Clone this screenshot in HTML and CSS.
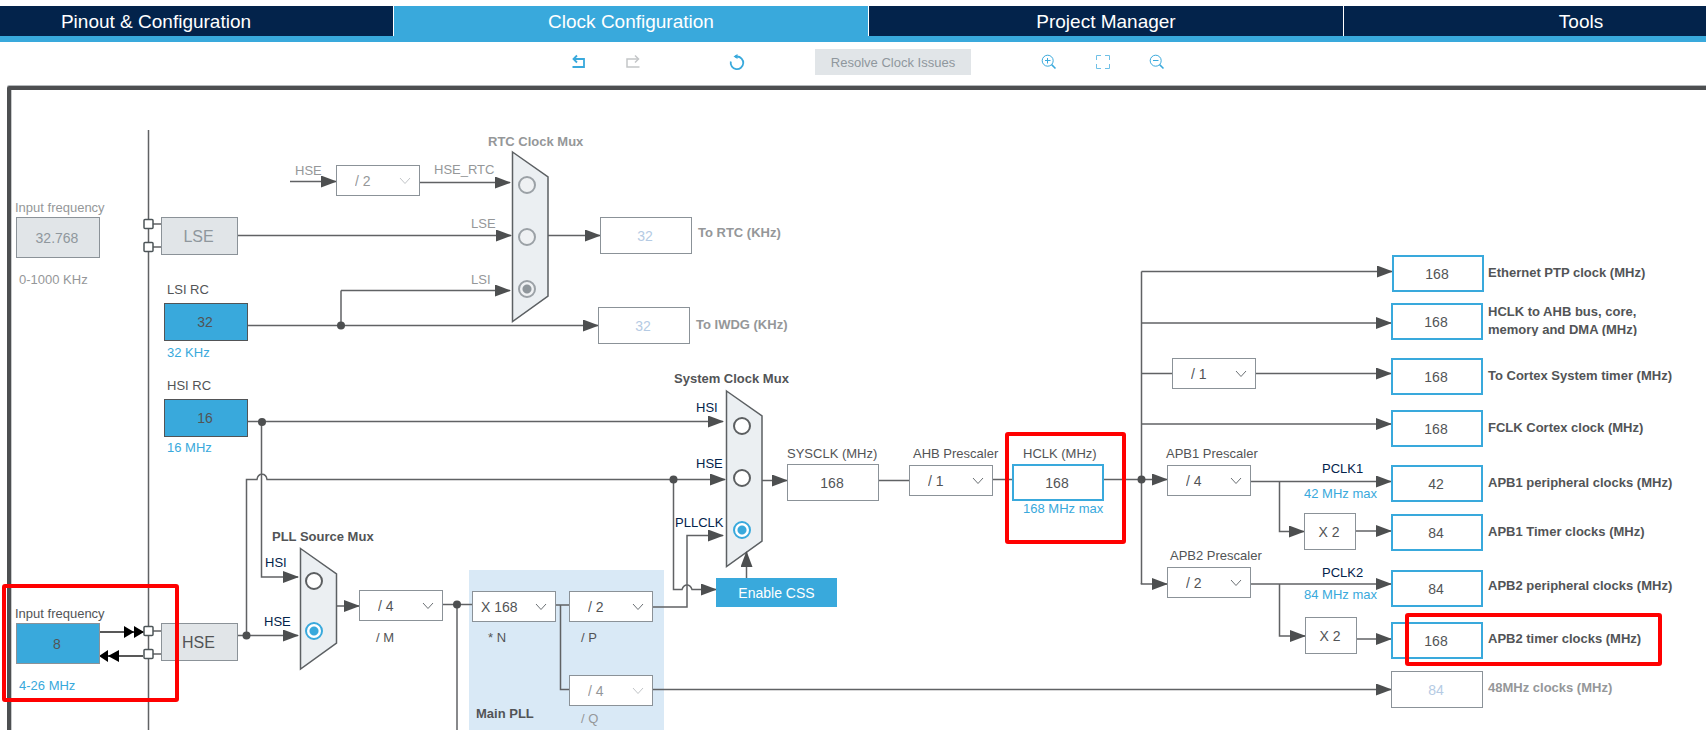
FILE: index.html
```html
<!DOCTYPE html>
<html lang="en">
<head>
<meta charset="utf-8">
<title>Clock Configuration</title>
<link rel="stylesheet" href="styles.css">
</head>
<body>
<nav class="tabs">
  <a class="tab tab-first" href="#pinout">Pinout &amp; Configuration</a>
  <a class="tab tab-active" href="#clock" aria-current="page">Clock Configuration</a>
  <a class="tab" href="#project">Project Manager</a>
  <a class="tab tab-last" href="#tools">Tools</a>
</nav>

<div class="toolbar">
  <div class="tool-group">
    <button class="tool" aria-label="Undo"><svg viewBox="0 0 22 22"><path d="M4.500 16H16V8H6" fill="none" stroke-width="1.800"/><path d="M9 4.500L5.500 8L9 11.500" fill="none" stroke-width="1.800"/></svg></button>
    <button class="tool tool-off" aria-label="Redo" disabled><svg viewBox="0 0 22 22"><path d="M17.500 16H5V8H16" fill="none" stroke-width="1.500"/><path d="M13 4.500L16.500 8L13 11.500" fill="none" stroke-width="1.500"/></svg></button>
  </div>
  <button class="tool tool-reset" aria-label="Reset"><svg viewBox="0 0 22 22"><path d="M4.800 10.500A6.300 6.300 0 1 0 11 5.500H9" fill="none" stroke-width="1.800"/><path d="M11.500 3L7.500 5.500L11.500 8Z" fill="currentColor" stroke="none"/></svg></button>
  <button class="resolve" disabled>Resolve Clock Issues</button>
  <div class="tool-group">
    <button class="tool" aria-label="Zoom in"><svg viewBox="0 0 22 22"><circle cx="9.700" cy="9.700" r="5.500" fill="none"/><path d="M13.600 13.600L17.500 17.500" fill="none" stroke-width="1.500"/><path d="M7 9.500H12.500M9.500 7V12.500" fill="none"/></svg></button>
    <button class="tool tool-fit" aria-label="Fit to window"><svg viewBox="0 0 22 22"><path d="M4.500 9V4.500H9M13 4.500H17.500V9M17.500 13V17.500H13M9 17.500H4.500V13" fill="none"/></svg></button>
    <button class="tool" aria-label="Zoom out"><svg viewBox="0 0 22 22"><circle cx="9.700" cy="9.700" r="5.500" fill="none"/><path d="M13.600 13.600L17.500 17.500" fill="none" stroke-width="1.500"/><path d="M7 9.500H12.500" fill="none"/></svg></button>
  </div>
</div>

<main class="diagram">
  <div class="frame"></div>
  <div class="pll-panel"></div>

  <svg class="wires" width="1706" height="648" viewBox="0 82 1706 648" aria-hidden="true">
    <defs>
      <marker id="arrow" markerUnits="userSpaceOnUse" markerWidth="16" markerHeight="12" refX="15" refY="6" orient="auto"><path class="head" d="M0 0L16 6L0 12Z"/></marker>
      <symbol id="chevron" viewBox="0 0 12 8"><path d="M1 1L6 6.500L11 1"/></symbol>
    </defs>
    <g class="line">
      <path d="M148.500 130V730"/>
      <path d="M153 224H161M153 247H161M153 631H161M153 654H161"/>
      <path d="M457 605V730"/>
      <path d="M443 604.500H472"/>
      <path d="M556 605H569M560.500 605V689.500H569"/>
      <path d="M879 480.500H909M993 479.500H1012"/>
      <path d="M1141.500 271.500V584M1141.500 373.500H1172"/>
      <path d="M341 325V290.500" />
    </g>
    <g class="line pointed">
      <path d="M290 181.500H336"/>
      <path d="M420 182.500H510"/>
      <path d="M238 235.500H511"/>
      <path d="M341 290.500H510"/>
      <path d="M248 325.500H598"/>
      <path d="M548 235.500H600"/>
      <path d="M248 421.500H723"/>
      <path d="M261.500 422V577H298"/>
      <path d="M238 635.500H298"/>
      <path d="M246.500 635V479.500H257C258 472.500 266 472.500 267 479.500H725"/>
      <path d="M336 606H359"/>
      <path d="M673.500 479.500V589.500H682C684 583.500 690 583.500 692 589.500H716"/>
      <path d="M653 607H687V535.500H723"/>
      <path d="M762 480.500H787"/>
      <path d="M1104 479.500H1167"/>
      <path d="M1141.500 271.500H1392"/>
      <path d="M1141.500 323H1391"/>
      <path d="M1256 373.500H1391"/>
      <path d="M1141.500 424H1391"/>
      <path d="M1141.500 583V584H1167"/>
      <path d="M1251 481.500H1391"/>
      <path d="M1279.500 481.500V531.500H1304"/>
      <path d="M1356 531H1391"/>
      <path d="M1251 584H1391"/>
      <path d="M1279.500 584V636H1305"/>
      <path d="M1357 639H1391"/>
      <path d="M653 689.500H1391"/>
    </g>
    <g class="mux-shape">
      <path d="M512.500 152L548 177V296L512.500 321.500Z"/>
      <path d="M300.500 548.500L336.500 574V643L300.500 669Z"/>
      <path d="M726.500 391L762 416V541L726.500 566.500Z"/>
    </g>
    <g class="line pointed"><path d="M746.500 578V552"/></g>
    <g class="dots">
      <circle cx="341" cy="325.500" r="4"/><circle cx="262" cy="422" r="4"/><circle cx="246.500" cy="635.500" r="4"/>
      <circle cx="457" cy="604.500" r="4"/><circle cx="673.500" cy="479.500" r="4"/><circle cx="1141.500" cy="479.500" r="4"/>
    </g>
    <g class="pads">
      <rect x="144" y="219.500" width="9" height="9" rx="1"/><rect x="144" y="242.500" width="9" height="9" rx="1"/>
      <rect x="144" y="626.500" width="9" height="9" rx="1"/><rect x="144" y="649.500" width="9" height="9" rx="1"/>
    </g>
    <g class="ext">
      <path d="M100 632H143M143 656H104"/>
      <path class="ext-head" d="M124 626L134 632L124 638ZM134 626L144 632L134 638ZM119 650L108 656L119 662ZM108 650L99 656L108 662Z"/>
    </g>
  </svg>

  <!-- Oscillators -->
  <label class="text dim at-lse-in-label" for="lse-in">Input frequency</label>
  <input class="box input gray at-lse-in" id="lse-in" value="32.768" disabled>
  <span class="text dim at-lse-range">0-1000 KHz</span>
  <div class="box source dim at-lse">LSE</div>
  <label class="text at-lsi-label" for="lsi">LSI RC</label>
  <input class="box osc at-lsi" id="lsi" value="32" readonly>
  <span class="text blue at-lsi-range">32 KHz</span>
  <label class="text at-hsi-label" for="hsi">HSI RC</label>
  <input class="box osc at-hsi" id="hsi" value="16" readonly>
  <span class="text blue at-hsi-range">16 MHz</span>
  <label class="text at-hse-in-label" for="hse-in">Input frequency</label>
  <input class="box input fill at-hse-in" id="hse-in" value="8">
  <span class="text blue at-hse-range">4-26 MHz</span>
  <div class="box source at-hse">HSE</div>

  <!-- RTC -->
  <span class="text dim at-rtc-hse">HSE</span>
  <div class="pick dim at-rtc-div"><select aria-label="RTC prescaler" disabled><option>/ 2</option></select><svg class="chevron"><use href="#chevron"/></svg></div>
  <span class="text dim bold at-rtc-title">RTC Clock Mux</span>
  <label class="text dim at-rtc-l1" for="rtc-1">HSE_RTC</label>
  <label class="text dim at-rtc-l2" for="rtc-2">LSE</label>
  <label class="text dim at-rtc-l3" for="rtc-3">LSI</label>
  <div class="mux at-rtc-mux">
    <input type="radio" name="rtc" id="rtc-1" disabled>
    <input type="radio" name="rtc" id="rtc-2" disabled>
    <input type="radio" name="rtc" id="rtc-3" disabled checked>
  </div>
  <input class="box value off at-rtc-out" id="rtc-out" value="32" disabled>
  <label class="text dim bold at-rtc-out-label" for="rtc-out">To RTC (KHz)</label>
  <input class="box value off at-iwdg" id="iwdg" value="32" disabled>
  <label class="text dim bold at-iwdg-label" for="iwdg">To IWDG (KHz)</label>

  <!-- PLL -->
  <span class="text bold at-src-title">PLL Source Mux</span>
  <label class="text navy at-src-l1" for="src-1">HSI</label>
  <label class="text navy at-src-l2" for="src-2">HSE</label>
  <div class="mux mux-short at-src-mux">
    <input type="radio" name="src" id="src-1">
    <input type="radio" name="src" id="src-2" checked>
  </div>
  <div class="pick at-m"><select id="m"><option>/ 4</option></select><svg class="chevron"><use href="#chevron"/></svg></div>
  <label class="text at-m-label" for="m">/ M</label>
  <div class="pick wide at-n"><select id="n"><option>X 168</option></select><svg class="chevron"><use href="#chevron"/></svg></div>
  <label class="text at-n-label" for="n">* N</label>
  <div class="pick at-p"><select id="p"><option>/ 2</option></select><svg class="chevron"><use href="#chevron"/></svg></div>
  <label class="text at-p-label" for="p">/ P</label>
  <div class="pick dim at-q"><select id="q" disabled><option>/ 4</option></select><svg class="chevron"><use href="#chevron"/></svg></div>
  <label class="text dim at-q-label" for="q">/ Q</label>
  <span class="text bold at-pll-title">Main PLL</span>

  <!-- System clock -->
  <span class="text bold at-sys-title">System Clock Mux</span>
  <label class="text navy at-sys-l1" for="sys-1">HSI</label>
  <label class="text navy at-sys-l2" for="sys-2">HSE</label>
  <label class="text navy at-sys-l3" for="sys-3">PLLCLK</label>
  <div class="mux at-sys-mux">
    <input type="radio" name="sys" id="sys-1">
    <input type="radio" name="sys" id="sys-2">
    <input type="radio" name="sys" id="sys-3" checked>
  </div>
  <button class="css-button at-css">Enable CSS</button>
  <label class="text at-sysclk-label" for="sysclk">SYSCLK (MHz)</label>
  <input class="box value at-sysclk" id="sysclk" value="168" readonly>
  <label class="text at-ahb-label" for="ahb">AHB Prescaler</label>
  <div class="pick at-ahb"><select id="ahb"><option>/ 1</option></select><svg class="chevron"><use href="#chevron"/></svg></div>
  <label class="text at-hclk-label" for="hclk">HCLK (MHz)</label>
  <input class="box value live at-hclk" id="hclk" value="168">
  <span class="text blue at-hclk-max">168 MHz max</span>

  <!-- Peripheral buses -->
  <div class="pick at-cortex-div"><select aria-label="Cortex prescaler"><option>/ 1</option></select><svg class="chevron"><use href="#chevron"/></svg></div>
  <label class="text at-apb1-label" for="apb1">APB1 Prescaler</label>
  <div class="pick at-apb1"><select id="apb1"><option>/ 4</option></select><svg class="chevron"><use href="#chevron"/></svg></div>
  <label class="text at-apb2-label" for="apb2">APB2 Prescaler</label>
  <div class="pick at-apb2"><select id="apb2"><option>/ 2</option></select><svg class="chevron"><use href="#chevron"/></svg></div>
  <span class="text navy at-pclk1">PCLK1</span>
  <span class="text blue at-pclk1-max">42 MHz max</span>
  <div class="box times at-x1">X 2</div>
  <span class="text navy at-pclk2">PCLK2</span>
  <span class="text blue at-pclk2-max">84 MHz max</span>
  <div class="box times at-x2">X 2</div>

  <!-- Outputs -->
  <input class="box value live at-out1" id="out1" value="168">
  <label class="text bold at-out1-label" for="out1">Ethernet PTP clock (MHz)</label>
  <input class="box value live at-out2" id="out2" value="168">
  <label class="text bold two-lines at-out2-label" for="out2">HCLK to AHB bus, core,<br>memory and DMA (MHz)</label>
  <input class="box value live at-out3" id="out3" value="168">
  <label class="text bold at-out3-label" for="out3">To Cortex System timer (MHz)</label>
  <input class="box value live at-out4" id="out4" value="168">
  <label class="text bold at-out4-label" for="out4">FCLK Cortex clock (MHz)</label>
  <input class="box value live at-out5" id="out5" value="42">
  <label class="text bold at-out5-label" for="out5">APB1 peripheral clocks (MHz)</label>
  <input class="box value live at-out6" id="out6" value="84">
  <label class="text bold at-out6-label" for="out6">APB1 Timer clocks (MHz)</label>
  <input class="box value live at-out7" id="out7" value="84">
  <label class="text bold at-out7-label" for="out7">APB2 peripheral clocks (MHz)</label>
  <input class="box value live at-out8" id="out8" value="168">
  <label class="text bold at-out8-label" for="out8">APB2 timer clocks (MHz)</label>
  <input class="box value off at-out9" id="out9" value="84" disabled>
  <label class="text bold dim at-out9-label" for="out9">48MHz clocks (MHz)</label>

  <!-- Highlights -->
  <div class="mark at-mark-hse"></div>
  <div class="mark at-mark-hclk"></div>
  <div class="mark at-mark-apb2"></div>
</main>
</body>
</html>
```
FILE: styles.css
```css
:root {
  --navy: #03234b;
  --blue: #39a9dc;
  --ink: #525456;
  --dim: #959799;
  --edge: #8b9298;
  --gray: #e1e5e8;
}

* { box-sizing: border-box; }

body {
  margin: 0;
  height: 100vh;
  display: flex;
  flex-direction: column;
  overflow: hidden;
  background: #fff;
  color: var(--ink);
  font-family: "Liberation Sans", Arial, sans-serif;
  font-size: 13px;
}

input, select, button { font-family: inherit; margin: 0; }

/* Tabs */
.tabs {
  display: grid;
  grid-template-columns: 394fr 475fr 475fr 362fr;
  margin-top: 6px;
  border-bottom: 6px solid var(--blue);
}
.tab {
  height: 30px;
  line-height: 32px;
  text-align: center;
  font-size: 19px;
  color: #fff;
  background: var(--navy);
  border-right: 1px solid #fff;
  text-decoration: none;
  white-space: nowrap;
}
.tab-first { padding-right: 81px; }
.tab-active { background: var(--blue); }
.tab-last { padding-left: 112px; border-right: 0; }

/* Toolbar */
.toolbar {
  height: 40px;
  display: flex;
  flex: none;
  align-items: center;
  justify-content: center;
  padding-left: 30px;
}
.tool-group { display: flex; gap: 32px; }
.tool {
  width: 22px;
  height: 22px;
  padding: 0;
  border: 0;
  background: none;
  color: var(--blue);
}
.tool svg { display: block; width: 22px; height: 22px; stroke: currentColor; }
.tool-off { color: #c4c6c8; }
.tool-fit { color: #6fc0e6; }
.tool-reset { margin: 0 67px 0 82px; }
.resolve {
  width: 156px;
  height: 26px;
  margin-right: 67px;
  padding: 0;
  border: 0;
  background: var(--gray);
  color: #8f979d;
  font-size: 13px;
}

/* Diagram canvas */
.diagram { position: relative; flex: 1; overflow: hidden; }
.frame {
  position: absolute;
  inset: 4px -8px -8px 7px;
  border: 4px solid #4d4f51;
  border-radius: 2px;
  box-shadow: 0 -1px 0 #b4b8bb, inset 1px 0 0 #c8cacb;
}
.wires { position: absolute; left: 0; top: 0; }
.line path { fill: none; stroke: #606264; stroke-width: 1.5; }
.pointed path { marker-end: url(#arrow); }
.line .head, .head { fill: #4d4f50; stroke: none; }
.mux-shape path { fill: #ebeff2; stroke: #5c6063; stroke-width: 1.5; }
.dots circle { fill: #4d4f50; }
.pads rect { fill: #fff; stroke: #4d5558; stroke-width: 1.5; }
.ext path { fill: none; stroke: #222; stroke-width: 1.5; }
.ext .ext-head { fill: #000; stroke: none; }

.pll-panel {
  position: absolute;
  left: 469px;
  top: 488px;
  width: 195px;
  bottom: 0;
  background: #d9e9f6;
}

.text {
  position: absolute;
  line-height: 18px;
  font-size: 13px;
  white-space: nowrap;
}
.bold { font-weight: bold; }
.dim { color: var(--dim); }
.blue { color: var(--blue); }
.navy { color: var(--navy); }
.two-lines { height: 33px; overflow: hidden; }

.box {
  position: absolute;
  padding: 0 2px 0 0;
  border: 1px solid var(--edge);
  border-radius: 0;
  background: #fff;
  color: var(--ink);
  font-size: 14px;
  text-align: center;
}
.input { width: 84px; height: 41px; }
.osc { width: 84px; height: 38px; background: var(--blue); border-color: var(--ink); }
.gray { background: var(--gray); color: #8f979d; }
.fill { background: var(--blue); }
.source {
  width: 77px;
  height: 38px;
  line-height: 38px;
  background: var(--gray);
  font-size: 16px;
}
.source.dim { color: #8f979d; }
.value { width: 92px; height: 37px; }
.live { border: 2px solid var(--blue); }
.off { color: #b5cbe4; }
.times { width: 52px; height: 37px; line-height: 36px; }

.pick { position: absolute; width: 84px; height: 31px; }
.pick select {
  appearance: none;
  width: 100%;
  height: 100%;
  padding: 0 0 0 18px;
  border: 1px solid var(--edge);
  border-radius: 0;
  background: #fff;
  color: var(--ink);
  font-size: 14px;
  opacity: 1;
}
.pick.wide select { padding-left: 8px; }
.pick.dim select { color: var(--dim); }
.chevron {
  position: absolute;
  right: 9px;
  top: 12px;
  width: 12px;
  height: 8px;
  fill: none;
  stroke: #6b7074;
  pointer-events: none;
}
.pick.dim .chevron { stroke: #c2c5c8; }

.mux { position: absolute; display: flex; flex-direction: column; gap: 34px; }
.mux-short { gap: 32px; }
.mux input {
  appearance: none;
  width: 18px;
  height: 18px;
  border: 2px solid #5c5f61;
  border-radius: 50%;
  background: #fff;
}
.mux input:checked {
  border-color: var(--blue);
  background: radial-gradient(circle, var(--blue) 4px, #fff 5px);
}
.mux input:disabled { border-color: #9ba1a6; background: #eff1f3; }
.mux input:disabled:checked { background: radial-gradient(circle, #8f969b 4px, #eff1f3 5px); }

.css-button {
  position: absolute;
  width: 121px;
  height: 29px;
  padding: 0;
  border: 0;
  background: var(--blue);
  color: #fff;
  font-size: 14px;
}

.mark {
  position: absolute;
  border: 4px solid #f00;
  border-radius: 3px;
  pointer-events: none;
}

/* Node positions on the canvas */
.at-lse-in-label { left: 15px; top: 117px; }
.at-lse-in { left: 16px; top: 135px; }
.at-lse-range { left: 19px; top: 189px; }
.at-lse { left: 161px; top: 135px; }
.at-lsi-label { left: 167px; top: 199px; }
.at-lsi { left: 164px; top: 221px; }
.at-lsi-range { left: 167px; top: 262px; }
.at-hsi-label { left: 167px; top: 295px; }
.at-hsi { left: 164px; top: 317px; }
.at-hsi-range { left: 167px; top: 357px; }
.at-hse-in-label { left: 15px; top: 523px; }
.at-hse-in { left: 16px; top: 541px; }
.at-hse-range { left: 19px; top: 595px; }
.at-hse { left: 161px; top: 541px; }

.at-rtc-hse { left: 295px; top: 80px; }
.at-rtc-div { left: 336px; top: 83px; }
.at-rtc-title { left: 488px; top: 51px; }
.at-rtc-l1 { left: 434px; top: 79px; }
.at-rtc-l2 { left: 471px; top: 133px; }
.at-rtc-l3 { left: 471px; top: 189px; }
.at-rtc-mux { left: 518px; top: 94px; }
.at-rtc-out { left: 600px; top: 135px; }
.at-rtc-out-label { left: 698px; top: 142px; }
.at-iwdg { left: 598px; top: 225px; }
.at-iwdg-label { left: 696px; top: 234px; }

.at-src-title { left: 272px; top: 446px; }
.at-src-l1 { left: 265px; top: 472px; }
.at-src-l2 { left: 264px; top: 531px; }
.at-src-mux { left: 305px; top: 490px; }
.at-m { left: 359px; top: 508px; }
.at-m-label { left: 376px; top: 547px; }
.at-n { left: 472px; top: 509px; }
.at-n-label { left: 488px; top: 547px; }
.at-p { left: 569px; top: 509px; }
.at-p-label { left: 581px; top: 547px; }
.at-q { left: 569px; top: 593px; }
.at-q-label { left: 581px; top: 628px; }
.at-pll-title { left: 476px; top: 623px; }

.at-sys-title { left: 674px; top: 288px; }
.at-sys-l1 { left: 696px; top: 317px; }
.at-sys-l2 { left: 696px; top: 373px; }
.at-sys-l3 { left: 675px; top: 432px; }
.at-sys-mux { left: 733px; top: 335px; }
.at-css { left: 716px; top: 496px; }
.at-sysclk-label { left: 787px; top: 363px; }
.at-sysclk { left: 787px; top: 382px; }
.at-ahb-label { left: 913px; top: 363px; }
.at-ahb { left: 909px; top: 383px; }
.at-hclk-label { left: 1023px; top: 363px; }
.at-hclk { left: 1012px; top: 382px; }
.at-hclk-max { left: 1023px; top: 418px; }

.at-cortex-div { left: 1172px; top: 276px; }
.at-apb1-label { left: 1166px; top: 363px; }
.at-apb1 { left: 1167px; top: 383px; }
.at-apb2-label { left: 1170px; top: 465px; }
.at-apb2 { left: 1167px; top: 485px; }
.at-pclk1 { left: 1322px; top: 378px; }
.at-pclk1-max { left: 1304px; top: 403px; }
.at-x1 { left: 1304px; top: 431px; }
.at-pclk2 { left: 1322px; top: 482px; }
.at-pclk2-max { left: 1304px; top: 504px; }
.at-x2 { left: 1305px; top: 535px; }

.at-out1 { left: 1392px; top: 173px; }
.at-out2 { left: 1391px; top: 221px; }
.at-out3 { left: 1391px; top: 276px; }
.at-out4 { left: 1391px; top: 328px; }
.at-out5 { left: 1391px; top: 383px; }
.at-out6 { left: 1391px; top: 432px; }
.at-out7 { left: 1391px; top: 488px; }
.at-out8 { left: 1391px; top: 540px; }
.at-out9 { left: 1391px; top: 589px; }
.at-out1-label { left: 1488px; top: 182px; }
.at-out2-label { left: 1488px; top: 221px; }
.at-out3-label { left: 1488px; top: 285px; }
.at-out4-label { left: 1488px; top: 337px; }
.at-out5-label { left: 1488px; top: 392px; }
.at-out6-label { left: 1488px; top: 441px; }
.at-out7-label { left: 1488px; top: 495px; }
.at-out8-label { left: 1488px; top: 548px; }
.at-out9-label { left: 1488px; top: 597px; }

.at-mark-hse { left: 2px; top: 502px; width: 177px; height: 118px; }
.at-mark-hclk { left: 1005px; top: 350px; width: 121px; height: 112px; }
.at-mark-apb2 { left: 1405px; top: 531px; width: 257px; height: 53px; }
```
